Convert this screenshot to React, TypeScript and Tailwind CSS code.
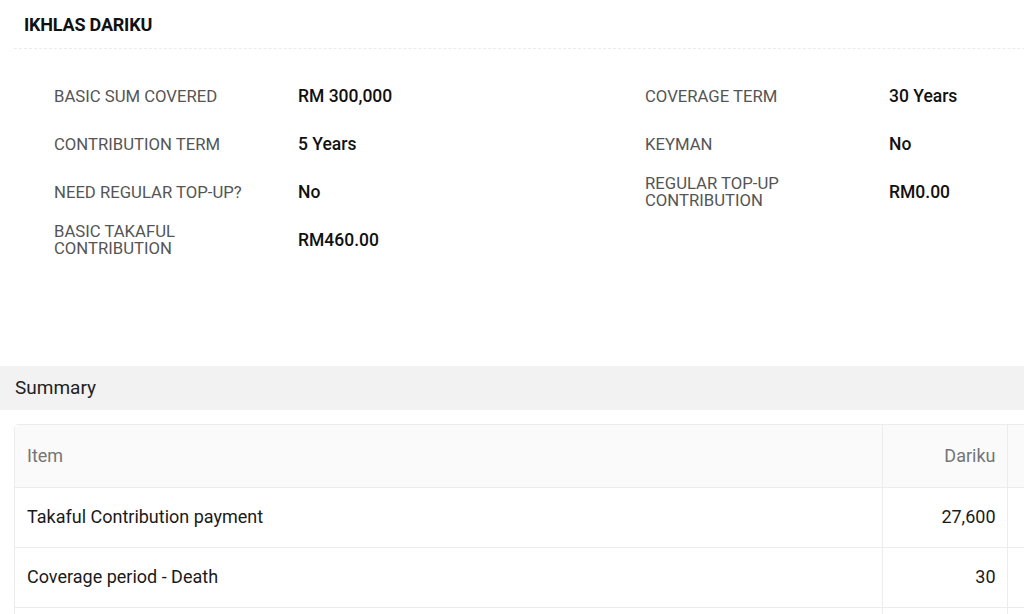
import React from "react";

const left = [
  ["BASIC SUM COVERED", "RM 300,000"],
  ["CONTRIBUTION TERM", "5 Years"],
  ["NEED REGULAR TOP-UP?", "No"],
  ["BASIC TAKAFUL CONTRIBUTION", "RM460.00"],
];
const right = [
  ["COVERAGE TERM", "30 Years"],
  ["KEYMAN", "No"],
  ["REGULAR TOP-UP CONTRIBUTION", "RM0.00"],
];

function Col({ rows }: { rows: string[][] }) {
  return (
    <div className="w-[591px] flex flex-col">
      {rows.map(([l, v]) => (
        <div key={l} className="h-[48px] flex items-center">
          <div className="w-[244px] pr-[50px] text-[16.7px] leading-[17px] text-[#555555]">{l}</div>
          <div className="text-[17.5px] font-medium text-[#111111]">{v}</div>
        </div>
      ))}
    </div>
  );
}

export default function App() {
  return (
    <div className="w-[1024px] h-[614px] overflow-hidden bg-white" style={{ fontFamily: "Roboto, 'Liberation Sans', sans-serif" }}>
      <div className="w-[1300px]">
        <div className="ml-[14px] h-[49px] pl-[10px] flex items-center border-b border-dashed border-[#ebebeb]">
          <span className="text-[18px] font-bold text-[#111111] tracking-[-0.2px]">IKHLAS DARIKU</span>
        </div>
        <div className="flex pl-[54px] pt-[23px]">
          <Col rows={left} />
          <Col rows={right} />
        </div>
        <div className="mt-[102px] h-[44px] bg-[#f2f2f2] flex items-center pl-[15px]">
          <span className="text-[19px] text-[#222222]">Summary</span>
        </div>
        <div className="ml-[14px] mt-[14px] border border-[#ececec] rounded-tl-[4px]">
          <table className="border-collapse text-[18px]">
            <thead>
              <tr className="bg-[#fafafa] h-[62px]">
                <th className="w-[867px] text-left font-normal text-[#757575] px-[12px]">Item</th>
                <th className="w-[125px] text-right font-normal text-[#757575] px-[11px] border-l border-[#ececec]">Dariku</th>
                <th className="w-[200px] border-l border-[#ececec]"></th>
              </tr>
            </thead>
            <tbody>
              {[
                ["Takaful Contribution payment", "27,600"],
                ["Coverage period - Death", "30"],
                ["", ""],
              ].map(([a, b], i) => (
                <tr key={i} className="h-[60px] border-t border-[#ececec]">
                  <td className="px-[12px] pb-[2px] text-[#1a1a1a]">{a}</td>
                  <td className="px-[11px] pb-[2px] text-right text-[#1a1a1a] border-l border-[#ececec]">{b}</td>
                  <td className="border-l border-[#ececec]"></td>
                </tr>
              ))}
            </tbody>
          </table>
        </div>
      </div>
    </div>
  );
}
